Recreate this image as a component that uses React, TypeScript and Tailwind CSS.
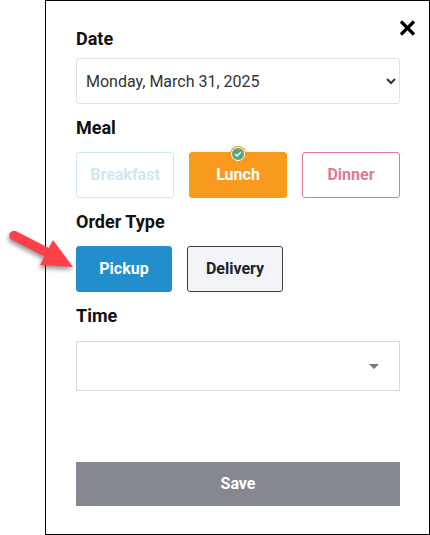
const roboto = "font-['Roboto',sans-serif]";

const FieldLabel = ({ children, className = "mb-3" }: { children: string; className?: string }) => (
  <h3 className={`h-6 text-[18px] leading-6 font-bold text-[#111111] ${className}`}>{children}</h3>
);

const ChoiceButton = ({ label, className }: { label: string; className: string }) => (
  <button className={`relative flex h-[46px] items-center justify-center rounded-[3px] border text-[16px] font-bold ${className}`}>
    {label}
  </button>
);

const App = () => {
  return (
    <div className={`relative h-[535px] w-[430px] overflow-hidden bg-white ${roboto}`}>
      <div className="relative ml-[45px] h-[535px] w-[385px] border border-black pt-[26px] pr-[29px] pl-[30px]">
        <button className="absolute top-[19px] right-[13px] text-black" aria-label="Close">
          <svg width="17" height="16" viewBox="0 0 17 16" fill="none" stroke="currentColor" strokeWidth="3.2">
            <path d="M2 1.5 15 14.5M15 1.5 2 14.5" />
          </svg>
        </button>

        <FieldLabel className="mb-[7px]">Date</FieldLabel>
        <select className="mb-3 h-[46px] w-full rounded-[3px] border border-[#dfe1e3] bg-white pl-[5px] text-[16px] text-[#333333]">
          <option>Monday, March 31, 2025</option>
        </select>

        <FieldLabel>Meal</FieldLabel>
        <div className="mb-3 flex gap-[15px]">
          <ChoiceButton label="Breakfast" className="w-[98px] border-[#cfe9f2] bg-white text-[#cfe9f2]" />
          <div className="relative">
            <ChoiceButton label="Lunch" className="w-[98px] border-[#f79a1e] bg-[#f79a1e] text-white" />
            <span className="absolute -top-[6px] left-[41px] flex h-4 w-4 items-center justify-center rounded-full bg-[#f79a1e]">
              <span className="flex h-[14px] w-[14px] items-center justify-center rounded-full border-[1.5px] border-white bg-[#5aa47c]">
                <svg width="8" height="8" viewBox="0 0 9 9" fill="none" stroke="white" strokeWidth="1.7">
                  <path d="M1.2 4.6 3.5 6.8 7.8 2.2" />
                </svg>
              </span>
            </span>
          </div>
          <ChoiceButton label="Dinner" className="w-[98px] border-[#e07a94] bg-white text-[#e07a94]" />
        </div>

        <FieldLabel>Order Type</FieldLabel>
        <div className="mb-3 flex gap-[15px]">
          <ChoiceButton label="Pickup" className="w-24 border-[#228ecb] bg-[#228ecb] text-white" />
          <ChoiceButton label="Delivery" className="w-24 border-[#3a3f47] bg-[#f2f4f7] text-[#212529]" />
        </div>

        <FieldLabel className="mb-[13px]">Time</FieldLabel>
        <div className="flex h-[50px] items-center justify-end border border-[#d9d9d9] pr-[20px]">
          <span className="h-0 w-0 border-x-[5px] border-t-[5px] border-x-transparent border-t-[#777777]" />
        </div>

        <button className="mt-[71px] h-11 w-full bg-[#858890] text-[16px] font-bold text-white">Save</button>
      </div>

      {/* red annotation arrow */}
      <svg className="absolute top-[226px] left-[8px] drop-shadow-[-1px_3px_2px_rgba(0,0,0,0.4)]" width="70" height="46" viewBox="0 0 70 46" fill="none">
        <path d="M6 9.5 44 29" stroke="#ff4049" strokeWidth="9.5" strokeLinecap="round" />
        <path d="M45 14 65 41 32 39Z" fill="#ff4049" />
      </svg>
    </div>
  );
};

export default App;
